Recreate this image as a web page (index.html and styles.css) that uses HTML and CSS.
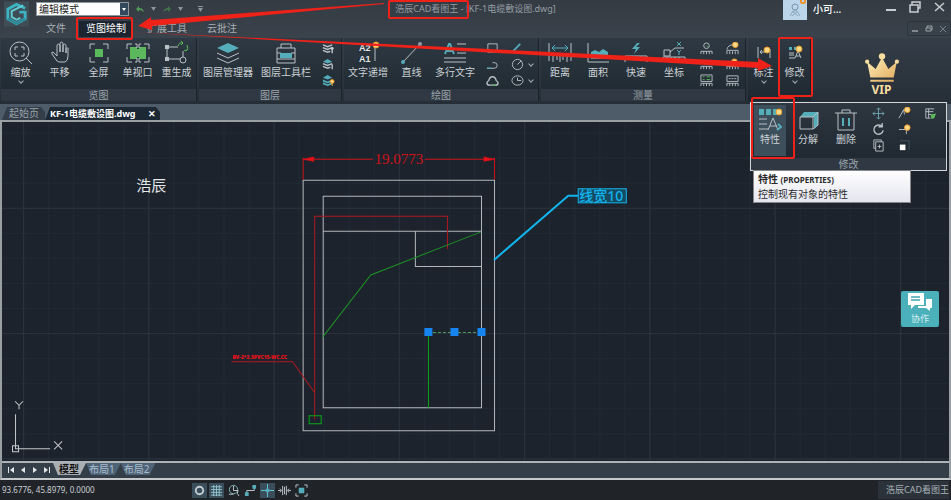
FILE: index.html
```html
<!DOCTYPE html>
<html lang="zh-CN">
<head>
  <meta charset="UTF-8" />
  <meta name="viewport" content="width=device-width, initial-scale=1.0"/>
  <title>浩辰CAD看图王</title>
  <link rel="stylesheet" href="styles.css">
</head>
<body>
  <div class="app">
    <header class="header">
      <div class="header-left">
        <svg class="logo" viewBox="0 0 26 26">
          <rect width="26" height="26" fill="#3f4d57"/>
          <path d="M22 7 13 3 4 8v10l9 5 9-5v-7h-6" fill="none" stroke="#3bb3c0" stroke-width="3"/>
          <path d="M20 4 8 10v6l5 3 4-2" fill="none" stroke="#63cdd5" stroke-width="2"/>
          <path d="m4 18 9 5 9-5" fill="none" stroke="#2a8797" stroke-width="2"/>
        </svg>
        <div class="header-rows">
          <div class="quick">
            <span class="mode">
              <select aria-label="模式"><option>编辑模式</option></select>
            </span>
            <button aria-label="撤销"><svg width="8" height="8" viewBox="0 0 8 8"><path d="M0 4 3 1v2q4 0 5 4-2-2-5-2v2z" fill="#4f9a55"/></svg></button>
            <button aria-label="撤销列表"><svg width="5" height="4" viewBox="0 0 5 4"><path d="M0 0h5L2.500 4z" fill="#8c959c"/></svg></button>
            <button aria-label="重做"><svg width="8" height="8" viewBox="0 0 8 8"><path d="M8 4 5 1v2q-4 0-5 4 2-2 5-2v2z" fill="#46704f"/></svg></button>
            <button aria-label="重做列表"><svg width="5" height="4" viewBox="0 0 5 4"><path d="M0 0h5L2.500 4z" fill="#8c959c"/></svg></button>
            <button class="more" aria-label="自定义"><svg width="5" height="6" viewBox="0 0 5 6"><path d="M0 0h5v1H0zM0 2h5L2.500 6z" fill="#8c959c"/></svg></button>
          </div>
          <nav class="menu">
            <a href="#">文件</a>
            <a href="#" class="active">览图绘制</a>
            <a href="#">扩展工具</a>
            <a href="#">云批注</a>
          </nav>
        </div>
      </div>
      <h1 class="title">浩辰CAD看图王 - [KF-1电缆敷设图.dwg]</h1>
      <div class="header-right">
        <div class="window-row">
          <svg class="avatar" viewBox="0 0 24 20">
            <rect width="24" height="20" fill="#bdd5e8"/>
            <circle cx="12" cy="7" r="3" fill="none" stroke="#7793ad"/>
            <path d="m7 16 3-5h4l3 5M9 11l6 5M15 11l-6 5" fill="none" stroke="#8aa6bd"/>
            <path d="M18 0v2q0 1 2 1t2-1V0" fill="none" stroke="#f0952d" stroke-width="2"/>
          </svg>
          <span class="user">小可...</span>
          <button aria-label="最小化"><svg width="12" height="12" viewBox="0 0 12 12"><path d="M1 9h10" stroke="#c8ced3" stroke-width="2"/></svg></button>
          <button aria-label="还原"><svg width="12" height="12" viewBox="0 0 12 12"><path d="M3 4V1h8v6H9M1 4h8v7H1z" fill="none" stroke="#c8ced3" stroke-width="1.500"/></svg></button>
          <button aria-label="关闭"><svg width="12" height="12" viewBox="0 0 12 12"><path d="m2 2 9 8M11 2l-9 8" stroke="#c8ced3" stroke-width="1.500"/></svg></button>
        </div>
        <div class="doc-controls">
          <button aria-label="最小化文档"><svg width="8" height="8" viewBox="0 0 8 8"><path d="M1 6h6" stroke="#9ba3aa" stroke-width="1.500"/></svg></button>
          <button aria-label="还原文档"><svg width="8" height="8" viewBox="0 0 8 8"><path d="M2 3V1h5v4H6M1 3h5v3H1z" fill="none" stroke="#9ba3aa"/></svg></button>
          <button aria-label="关闭文档"><svg width="8" height="8" viewBox="0 0 8 8"><path d="m1 1 6 6M7 1 1 7" stroke="#707b84"/></svg></button>
        </div>
      </div>
    </header>

    <div class="ribbon">
      <section class="panel">
        <div class="tools">
          <button class="tool">
            <svg viewBox="0 0 24 24"><circle cx="10.500" cy="10.500" r="9.500"/><path d="m17 17 6 6"/><path d="M6 9V6h3M12 6h3v3M15 12v3h-3M9 15H6v-3"/></svg>
            缩放<i class="caret"></i>
          </button>
          <button class="tool">
            <svg viewBox="0 0 24 24"><path d="m9 20-5-7q-1-2 1-2l4 4V5q0-2 1.500-2T12 5v6-8q0-2 1.500-2T15 3v8-6q0-2 1.500-2T18 5v7-4q0-1 1.500-1T20 8v7q0 5-3 6h-5q-2 0-3-1z"/></svg>
            平移
          </button>
          <button class="tool">
            <svg viewBox="0 0 24 24"><path d="M3 8V3h5M16 3h5v5M21 16v5h-5M8 21H3v-5"/><path class="green" d="M8 8h8v8H8z"/></svg>
            全屏
          </button>
          <button class="tool">
            <svg viewBox="0 0 24 24"><path class="green" d="M4 6h7v12H4zM13 6h7v12h-7z"/><path class="green" d="M4 8h16v8H4z"/><path d="M1 8V3h5M9 3h2v4M15 3h-2v4M18 3h5v5M23 16v5h-5M15 21h-2v-4M9 21h2v-4M6 21H1v-5"/></svg>
            单视口
          </button>
          <button class="tool">
            <svg viewBox="0 0 24 24"><path d="M13 6H2v12h13"/><path d="M0 4h4v4H0zM0 16h4v4H0z" fill="#b9c0c6" stroke="none"/><path d="M18 10v6"/><circle cx="18" cy="19" r="3"/><path d="M13 5q1-4 5-3M22 4q2 4-1 6M16 0l2 2-2 2M19 9l2 1 2-2" stroke="#5cb85c"/></svg>
            重生成
          </button>
        </div>
        <h2>览图</h2>
      </section>

      <section class="panel">
        <div class="tools">
          <button class="tool wide">
            <svg viewBox="0 0 24 24"><path class="teal" d="m12 2 11 5-11 5L1 7z"/><path d="m1 12 11 5 11-5M1 17l11 5 11-5"/></svg>
            图层管理器
          </button>
          <button class="tool wide">
            <svg viewBox="0 0 24 24"><path d="M7 7V3h10v4M3 7h18v15H3zM3 12h4M17 12h4M3 18h18"/><path class="teal" d="M6 12h12v5H6z"/></svg>
            图层工具栏
          </button>
          <div class="small-tools">
            <button aria-label="关闭图层"><svg viewBox="0 0 14 14"><path d="m1 3 5 2 5-2M1 6l5 2 5-2M1 9l5 2 3-1M11 7v5" stroke-width="1.500"/><circle cx="11" cy="7" r="1.500" fill="#ccd2d6" stroke="none"/></svg></button>
            <button aria-label="冻结图层"><svg viewBox="0 0 14 14"><path class="teal" d="m6 1 5 3-5 2-5-2z"/><path d="m1 6 5 2 5-2M1 9l5 2 3-1M11 7v5" stroke-width="1.500"/></svg></button>
            <button aria-label="打开图层"><svg viewBox="0 0 14 14"><path class="teal" d="m6 1 5 3-5 2-5-2zM1 6l5 2 5-2v2l-5 2-5-2zM1 9l5 2 5-2v2l-5 2-5-2z"/><circle class="gold" cx="11" cy="8" r="2"/><path d="M11 9v4" stroke="#e9a53a"/></svg></button>
          </div>
        </div>
        <h2>图层</h2>
      </section>

      <section class="panel draw">
        <div class="tools">
          <button class="tool mid">
            <svg viewBox="0 0 24 24"><g class="glyph"><text x="3" y="10">A2</text><text x="3" y="21">A1</text></g><path d="M19 6v14M17 5h4"/><circle class="gold" cx="20" cy="4" r="3"/></svg>
            文字递增
          </button>
          <button class="tool">
            <svg viewBox="0 0 24 24"><path d="M3 21 20 3"/><circle class="teal" cx="3" cy="21" r="2"/><circle cx="20" cy="3" r="2" fill="#8f9aa3" stroke="none"/></svg>
            直线
          </button>
          <button class="tool mid">
            <svg viewBox="0 0 24 24"><path d="m2 13 4-10h1l4 10M4 10h6" stroke="#55adba" stroke-width="2"/><path d="M14 3h9M14 8h9M14 12h9M1 17h22M1 21h22"/></svg>
            多行文字
          </button>
          <div class="small-tools">
            <button aria-label="矩形"><svg viewBox="0 0 14 14"><path d="M2 2h10v9H2z"/></svg></button>
            <button aria-label="多段线"><svg viewBox="0 0 14 14"><path d="M1 11h8q3 0 3-3T9 5H7"/><path d="M1 11h5" stroke="#55adba"/></svg></button>
            <button aria-label="云线"><svg viewBox="0 0 14 14"><path d="M4 12q-3 0-3-2t2-3q1-4 4-4t4 4q2 1 2 3t-3 2z" stroke-width="1.500"/><path d="M6 12h5" stroke="#5cb85c"/></svg></button>
          </div>
          <div class="small-tools pairs">
            <button aria-label="画笔"><svg viewBox="0 0 14 14"><path d="m2 10 8-8" stroke="#55adba" stroke-width="2"/></svg></button>
            <button aria-label="圆"><svg viewBox="0 0 14 14"><circle cx="7" cy="7" r="5.500"/><path d="m7 7 4-4"/></svg><i class="caret"></i></button>
            <button aria-label="椭圆"><svg viewBox="0 0 14 14"><ellipse cx="7" cy="7" rx="6" ry="5"/><path d="M7 4v3h4"/></svg><i class="caret"></i></button>
          </div>
        </div>
        <h2>绘图</h2>
      </section>

      <section class="panel measure">
        <div class="tools">
          <button class="tool">
            <svg viewBox="0 0 24 24"><path d="M1 2v18M23 2v18M5 14v7M9 14v5M12 14v7M15 14v5M19 14v7M1 14h22"/><path d="M4 7h16M7 4 4 7l3 3M17 4l3 3-3 3" stroke="#55adba"/></svg>
            距离
          </button>
          <button class="tool">
            <svg viewBox="0 0 24 24"><path d="M2 2v19h21"/><path class="teal" d="M5 18v-7l4-2 4 2 4-3 5 3v7z"/></svg>
            面积
          </button>
          <button class="tool">
            <svg viewBox="0 0 24 24"><path class="teal" d="m13 2-5 6h4l-2 5 6-7h-4l4-4z"/><path d="M1 21v-6h22v6M5 15v4M9 15v4M13 15v4M17 15v4"/></svg>
            快速
          </button>
          <button class="tool">
            <svg viewBox="0 0 24 24"><path d="M2 9h6v6H2zM8 11l5-4h9M1 21v-5h22v5M5 16v4M9 16v4M13 16v4M17 16v4"/><path d="m15 1 4 4M19 1l-4 4M15 9l2 2 2-2M17 11v3" stroke="#55adba"/></svg>
            坐标
          </button>
          <div class="small-tools">
            <button aria-label="半径"><svg viewBox="0 0 14 14"><circle cx="7" cy="4" r="3"/><path d="m7 4 2 2" stroke="#5cb85c"/><path d="M1 13v-3h12v3M4 10v3M7 10v3M10 10v3"/></svg></button>
            <button aria-label="弧长"><svg viewBox="0 0 14 14"><path d="M3 6q4-4 8 0M1 12V9h12v3M4 9v3M7 9v3M10 9v3"/></svg></button>
            <button aria-label="列表"><svg viewBox="0 0 14 14"><path d="M1 1h12v7H1zM1 13v-3h12v3M4 10v3M7 10v3M10 10v3"/><path d="M3 3h2M3 6h2M7 3h4M7 6h4" stroke="#5cb85c"/></svg></button>
          </div>
          <div class="small-tools">
            <button aria-label="角度"><svg viewBox="0 0 14 14"><path d="M1 8q1-5 7-5M1 13v-4h12v4M4 10v3M7 10v3M10 10v3"/><circle class="gold" cx="10" cy="3" r="3"/></svg></button>
            <button aria-label="连续"><svg viewBox="0 0 14 14"><path d="M1 12V9h12v3M4 9v3M7 9v3M10 9v3M1 5h6"/><circle class="gold" cx="9" cy="4" r="3"/></svg></button>
            <button aria-label="统计"><svg viewBox="0 0 14 14"><path d="M1 2h12v6H1zM1 13v-3h12v3M4 10v3M7 10v3M10 10v3M3 5h2M6 5h2M9 5h2"/></svg></button>
          </div>
        </div>
        <h2>测量</h2>
      </section>

      <section class="panel dropdowns">
        <button class="tool">
          <svg viewBox="0 0 24 24"><path d="M6 6v11M18 8v9M8 11h6M10 9l-2 2 2 2"/><circle class="gold" cx="15" cy="9" r="3"/></svg>
          标注<i class="caret"></i>
        </button>
        <button class="tool">
          <svg viewBox="0 0 24 24"><path class="teal" d="M6 6h3v3H6zM11 6h3v3h-3z"/><path d="M6 12h5M6 14h5M6 17h6M12 17l3-7 3 7M13 15h4"/><circle class="gold" cx="16" cy="8" r="3"/></svg>
          修改<i class="caret"></i>
        </button>

        <div class="popup">
          <div class="tools">
            <button class="tool selected">
              <svg viewBox="0 0 24 24"><path class="teal" d="M1 1h5v6H1zM8 1h5v6H8zM15 1h4v6h-4z"/><path d="M1 11h8M1 16h8M1 21h9M10 22l5-12 5 12M12 18h7"/><circle class="gold" cx="21" cy="4" r="3"/><path d="m20 16 3 3-4 3" stroke="#55adba" stroke-width="2"/></svg>
              特性
            </button>
            <button class="tool">
              <svg viewBox="0 0 24 24"><path class="teal" d="m4 9 4-5h14v13l-4 4V9z"/><path d="M4 9h13v12H4zM17 9l5-5M22 4v13l-5 4"/></svg>
              分解
            </button>
            <button class="tool">
              <svg viewBox="0 0 24 24"><path d="M1 5h22M8 5V2h8v3M4 5v17h16V5"/><path d="M9 10v8M15 10v8" stroke="#55adba" stroke-width="2"/></svg>
              删除
            </button>
            <div class="small-tools">
              <button aria-label="移动"><svg viewBox="0 0 14 14"><path d="M7 1v12M1 7h12M5 3l2-2 2 2M5 11l2 2 2-2M3 5 1 7l2 2M11 5l2 2-2 2" stroke="#6fa5b0"/></svg></button>
              <button aria-label="旋转"><svg viewBox="0 0 14 14"><path d="M11 4a5 5 0 1 0 1 4M11 0v4H7" stroke-width="1.500"/></svg></button>
              <button aria-label="复制"><svg viewBox="0 0 14 14"><path d="M4 10H2V1h8v2M4 3h8v10H4zM8 6v4M6 8h4"/></svg></button>
            </div>
            <div class="small-tools">
              <button aria-label="修剪"><svg viewBox="0 0 14 14"><path d="m1 12 5-9h3M6 3l1 5"/><circle class="gold" cx="10" cy="3" r="3"/></svg></button>
              <button aria-label="延伸"><svg viewBox="0 0 14 14"><path d="M1 7h7M9 7v5"/><circle class="gold" cx="10" cy="5" r="3"/></svg></button>
              <button aria-label="缩放对象"><svg viewBox="0 0 14 14"><path d="M2 2h10v10" stroke="#3f5564"/><path d="M2 6h6v6H2z" fill="#fff" stroke="none"/></svg></button>
            </div>
            <div class="small-tools">
              <button aria-label="匹配"><svg viewBox="0 0 14 14"><path d="M2 2h9M2 2v10h5M5 2v10M2 5h8M5 8h3"/><path class="green" d="m7 8 6-1-2 5-3 1z"/></svg></button>
            </div>
          </div>
          <h2>修改</h2>
          <div class="tooltip" role="tooltip">
            <p><strong>特性 <small>(PROPERTIES)</small></strong></p>
            <p>控制现有对象的特性</p>
          </div>
        </div>
      </section>

      <a href="#" class="vip">
        <svg viewBox="0 0 32 28">
          <defs><linearGradient id="gold" x2="1" y2="1"><stop stop-color="#fff0bd"/><stop offset="1" stop-color="#dfa858"/></linearGradient></defs>
          <path d="m2 8 8 7 6-11 6 11 8-7-3 15H5zM5 25h22v2H5z" fill="url(#gold)"/>
          <g fill="#f7dea0"><circle cx="16" cy="3" r="3"/><circle cx="2" cy="8" r="2"/><circle cx="30" cy="8" r="2"/></g>
        </svg>
        VIP
      </a>
    </div>

    <nav class="doc-tabs">
      <a href="#">起始页</a>
      <a href="#" class="active">KF-1电缆敷设图.dwg <span>✕</span></a>
    </nav>

    <main class="workspace">
      <div class="canvas">
        <svg class="drawing" viewBox="3 122 945 339" preserveAspectRatio="xMidYMid slice">
          <defs>
            <pattern id="minor" x="24" y="83" width="25" height="25" patternUnits="userSpaceOnUse"><path d="M0 .500h25M.500 0v25" stroke="#202a34"/></pattern>
            <pattern id="major" x="24" y="83" width="125" height="125" patternUnits="userSpaceOnUse"><path d="M0 .500h125M.500 0v125" stroke="#29323d"/></pattern>
          </defs>
          <rect x="3" y="122" width="945" height="339" fill="url(#minor)"/>
          <rect x="3" y="122" width="945" height="339" fill="url(#major)"/>

          <text x="137" y="191" fill="#e4e7e9" font-size="15">浩辰</text>

          <!-- walls -->
          <g fill="none" stroke="#b4b8bc">
            <path d="M303.500 180.500h191v250h-191z"/>
            <path d="M323.500 196.500h158v211h-158zM323.500 231.500h158M415.500 231.500v35h66"/>
          </g>

          <!-- dimension -->
          <g stroke="#cf1218" fill="none">
            <path d="M303.500 180v-22M494.500 180v-22M303 159.500h70M425 159.500h69"/>
            <path d="m304 159.500 10-2v4zM494 159.500l-10-2v4z" fill="#f01018"/>
          </g>
          <text class="dimension" x="399" y="164" text-anchor="middle">19.0773</text>

          <!-- cable runs -->
          <path d="M447.500 249v-32.500h-132.500V419M232 361.500h61l22 31" fill="none" stroke="#b01820"/>
          <text class="note" x="233" y="359">BV-2*2.5PVC15-WC.CC</text>
          <path d="m481 232-110 43-48 62" fill="none" stroke="#1c9126"/>
          <path d="M428.500 332v76M309.500 415.500h12v8h-12z" fill="none" stroke="#0ba814"/>
          <path d="M428 332.500h53" stroke="#4c9b55" stroke-dasharray="3 2"/>
          <path d="M424.500 328h8v8h-8zM450.500 328h8v8h-8zM477.500 328h8v8h-8z" fill="#1683ef"/>

          <!-- leader -->
          <path d="m494 260 74-64h10" fill="none" stroke="#12b4ee" stroke-width="2"/>
          <rect x="578" y="189" width="48" height="14" fill="#164a60" stroke="#12b4ee" stroke-width="1"/>
          <text x="579" y="201" fill="#12b4ee" font-size="14" font-weight="500">线宽10</text>

          <!-- axes -->
          <g fill="none" stroke="#c3c8cc">
            <path d="M16.500 448v-34M16 448.500h35M13.500 445.500h6v6h-6z"/>
            <path d="m16 401 4 4 4-4M20 405v4M55 441l8 8M63 441l-8 8"/>
          </g>
        </svg>
        <button class="chat">
          <svg viewBox="0 0 26 20"><path d="M1 1h16v12H8l-4 4v-4H1z" fill="#fff"/><path d="M19 7h6v9h-2v3l-4-3h-8v-2h8z" fill="#fff"/><path d="M4 5h9M4 8h9" stroke="#45a5b0" stroke-width="1.500"/></svg>
          协作
        </button>
      </div>
      <nav class="sheets">
        <button aria-label="第一个"><svg viewBox="0 0 6 6"><path d="M0 0h1v6H0zM6 0v6L2 3z"/></svg></button>
        <button aria-label="上一个"><svg viewBox="0 0 6 6"><path d="M5 0v6L1 3z"/></svg></button>
        <button aria-label="下一个"><svg viewBox="0 0 6 6"><path d="M1 0v6l4-3z"/></svg></button>
        <button aria-label="最后一个"><svg viewBox="0 0 6 6"><path d="M5 0h1v6H5zM0 0v6l4-3z"/></svg></button>
        <a href="#" class="active">模型</a>
        <a href="#">布局1</a>
        <a href="#">布局2</a>
      </nav>
    </main>

    <footer class="status">
      <span class="coords">93.6776, 45.8979, 0.0000</span>
      <div class="toggles">
        <button class="on" aria-label="捕捉"><svg viewBox="0 0 14 14"><circle cx="7" cy="7" r="4" stroke-width="2"/></svg></button>
        <button class="on" aria-label="栅格"><svg viewBox="0 0 14 14"><path d="M1 3h12M1 6h12M1 9h12M1 12h12M4 1v12M7 1v12M10 1v12" stroke="#93c6cf"/></svg></button>
        <button aria-label="极轴"><svg viewBox="0 0 14 14"><circle cx="7" cy="6" r="4.500" stroke="#7fb4bd"/><path d="M7 2v5h5l-1 3 2 3M2 11h5"/></svg></button>
        <button aria-label="正交"><svg viewBox="0 0 14 14"><path d="M3 11V7h8V3"/><path class="teal" d="M1 9h4v4H1zM9 1h4v4H9z"/></svg></button>
        <button class="on" aria-label="对象捕捉"><svg viewBox="0 0 14 14"><path d="M7 0v14M0 7h14" stroke="#5fd0dc"/><path class="teal" d="M4 7l3-3 3 3-3 3z"/></svg></button>
        <button aria-label="线宽"><svg viewBox="0 0 14 14"><path d="M5 2v10M9 2v10M7 3v8M0 7h3M11 7h3M2 5l2 2-2 2M12 5l-2 2 2 2"/></svg></button>
        <button aria-label="全屏显示"><svg viewBox="0 0 14 14"><path d="M1 4V1h3M10 1h3v3M13 10v3h-3M4 13H1v-3"/><path class="teal" d="M4 4h6v6H4z"/></svg></button>
      </div>
      <span class="brand">浩辰CAD看图王</span>
    </footer>

    <svg class="markup" width="951" height="200" viewBox="0 0 951 200">
      <g fill="none" stroke="#ee2219" stroke-width="2">
        <rect x="77" y="18" width="55" height="21" rx="1"/>
        <rect x="389" y="1" width="79" height="17" rx="1"/>
        <rect x="779" y="38" width="33" height="58" rx="1"/>
        <rect x="752" y="98" width="42" height="60" rx="1"/>
      </g>
      <path d="m384 3-233 17v-3l-13 9 14 4v-4l232-22zM133 32l625 30v-4l14 8-14 5v-3z" fill="#ee2219"/>
    </svg>
  </div>
</body>
</html>
```
FILE: styles.css
```css
* {
  box-sizing: border-box;
}

body {
  margin: 0;
  font-family: "Noto Sans", "Noto Sans CJK SC", sans-serif;
  font-size: 10px;
  line-height: 14px;
  color: #ccd2d6;
  background: #222a33;
}

button {
  padding: 0;
  border: none;
  background: none;
  color: inherit;
  font: inherit;
  cursor: pointer;
}

a {
  color: inherit;
  text-decoration: none;
}

svg {
  display: block;
}

h1,
h2,
p {
  margin: 0;
  font-size: 10px;
  font-weight: 400;
}

.app {
  position: relative;
  display: flex;
  flex-direction: column;
  min-height: 100vh;
}

/* header */
.header {
  display: grid;
  grid-template-columns: 1fr auto 1fr;
  height: 38px;
  background: linear-gradient(#343b43, #3a424b);
}

.header-left {
  display: flex;
  gap: 7px;
  padding-left: 4px;
}

.logo {
  width: 25px;
  height: 26px;
  margin-top: 1px;
}

.header-rows {
  display: flex;
  flex-direction: column;
  gap: 4px;
}

.quick {
  display: flex;
  align-items: center;
  gap: 7px;
  height: 17px;
  padding-top: 1px;
}

.mode {
  position: relative;
}

.mode select {
  display: block;
  width: 93px;
  height: 14px;
  padding: 0 2px;
  border: 1px solid #8b97a0;
  border-radius: 0;
  appearance: none;
  background: #fff;
  color: #222;
  font: inherit;
  line-height: 12px;
}

.mode::after {
  content: "";
  position: absolute;
  top: 1px;
  right: 1px;
  width: 8px;
  height: 12px;
  background: #33485a;
  clip-path: polygon(0 0, 100% 0, 100% 100%, 0 100%, 0 0, 2px 5px, 4px 8px, 6px 5px, 2px 5px);
}

.quick .more {
  margin-left: 8px;
}

.menu {
  display: flex;
  height: 16px;
  color: #a8afb5;
}

.menu a {
  padding: 0 10px;
}

.menu .active {
  margin: 0 4px 0 3px;
  padding: 0 7px;
  background: #1c2530;
  color: #fff;
}

.title {
  padding-top: 2px;
  color: #959da4;
  font-size: 9px;
}

.header-right {
  display: flex;
  flex-direction: column;
  align-items: flex-end;
  gap: 1px;
}

.window-row {
  display: flex;
  align-items: center;
  height: 20px;
  padding-right: 6px;
}

.avatar {
  width: 24px;
  height: 20px;
  margin-right: 6px;
}

.user {
  width: 72px;
  padding-bottom: 2px;
  color: #fff;
  font-weight: 500;
}

.window-row button {
  padding-bottom: 6px;
}

.window-row button + button {
  margin-left: 12px;
}

.doc-controls {
  display: flex;
  align-items: center;
  gap: 6px;
  height: 15px;
  padding: 0 3px;
  border: 1px solid #2b333c;
  border-radius: 2px;
}

/* ribbon */
.ribbon {
  display: flex;
  gap: 3px;
  height: 66px;
  padding: 0 1px 3px;
  background: linear-gradient(#353e48, #252d36);
}

.panel {
  display: flex;
  flex-direction: column;
  justify-content: space-between;
  background: linear-gradient(#2f3943, #1e2830);
  box-shadow: 1px 0 #1b232b;
}

.panel h2 {
  height: 12px;
  background: #303943;
  color: #9ba4ab;
  line-height: 12px;
  text-align: center;
}

.tools {
  display: flex;
}

.tool {
  display: flex;
  flex-direction: column;
  align-items: center;
  width: 39px;
  padding-top: 3px;
  white-space: nowrap;
}

.measure .tool,
.popup .tool {
  width: 38px;
}

.tool.wide {
  width: 58px;
}

.tool.mid {
  width: 48px;
}

.ribbon svg {
  fill: none;
  stroke: #b9c0c6;
}

.tool svg {
  width: 24px;
  height: 24px;
}

.app .green {
  fill: #5cb85c;
  stroke: none;
}

.app .teal {
  fill: #55adba;
  stroke: none;
}

.app .gold {
  fill: #ffd98a;
  stroke: #f09a26;
}

.glyph {
  fill: #e4e7e9;
  stroke: none;
  font-family: "Liberation Sans", sans-serif;
  font-size: 9px;
  font-weight: 700;
}

.caret {
  width: 4px;
  height: 4px;
  border: solid #a5adb3;
  border-width: 0 1px 1px 0;
  transform: rotate(45deg);
}

.small-tools {
  display: flex;
  flex-direction: column;
  align-items: center;
  width: 26px;
  padding-top: 2px;
}

.small-tools button {
  display: flex;
  align-items: center;
  height: 16px;
}

.small-tools svg {
  width: 13px;
  height: 13px;
}

.small-tools.pairs {
  align-items: flex-start;
  width: 33px;
  padding-left: 6px;
}

.small-tools .caret {
  margin-left: 5px;
}

.panel.dropdowns {
  position: relative;
  flex-direction: row;
}

.dropdowns > .tool {
  width: 31px;
}

.popup {
  position: absolute;
  z-index: 2;
  top: 64px;
  left: 2px;
  width: 197px;
  border: 1px solid #d3d7da;
  background: linear-gradient(#2e3740, #1d262e);
}

.popup .tools {
  height: 55px;
  padding: 2px 0;
}

.popup .small-tools {
  padding-top: 0;
}

.popup .tool.selected {
  width: 32px;
  margin: 0 3px;
  background: #3c4f5a;
}

.tooltip {
  position: absolute;
  top: 100%;
  left: 2px;
  width: 158px;
  padding: 1px 4px;
  border: 1px solid #888;
  background: linear-gradient(#fff, #e4e5ef);
  color: #2a2a2a;
}

.tooltip small {
  font-size: 8px;
}

.vip {
  display: flex;
  flex: 1;
  flex-direction: column;
  align-items: center;
  padding-top: 15px;
  color: #f7dea0;
  font-size: 12px;
  font-weight: 700;
}

.vip svg {
  width: 34px;
  height: 30px;
  stroke: none;
}

/* document tabs */
.doc-tabs {
  display: flex;
  align-items: flex-end;
  height: 16px;
  padding-left: 2px;
  background: #4e5c6a;
  line-height: 13px;
}

.doc-tabs a {
  height: 13px;
  padding: 0 6px 0 7px;
  background: #343e49;
  clip-path: polygon(5px 0, calc(100% - 4px) 0, 100% 5px, 100% 100%, 0 100%);
  color: #9ba4ab;
}

.doc-tabs .active {
  padding: 0 4px 0 5px;
  background: #1c2833;
  color: #fff;
  font-size: 9px;
  font-weight: 700;
}

.doc-tabs span {
  margin-left: 10px;
}

/* drawing */
.workspace {
  display: flex;
  flex: 1;
  flex-direction: column;
  border: 2px solid #9a9fa4;
  border-bottom-color: #c5c9cc;
}

.canvas {
  position: relative;
  display: flex;
  flex: 1;
  background: #1c232c;
}

.drawing {
  flex: 1;
  width: 100%;
  height: 339px;
}

.dimension {
  fill: #cf1218;
  font-family: "Liberation Serif", serif;
  font-size: 15px;
}

.note {
  fill: #f01018;
  font-size: 5px;
  font-weight: 900;
}

.chat {
  position: absolute;
  top: 169px;
  right: 10px;
  display: flex;
  flex-direction: column;
  align-items: center;
  justify-content: center;
  width: 38px;
  height: 36px;
  border-radius: 2px;
  background: #4bb0ba;
  color: #d4eef1;
  font-size: 9px;
}

.chat svg {
  width: 26px;
  height: 20px;
}

.sheets {
  display: flex;
  height: 17px;
  padding-left: 3px;
  border-top: 2px solid #aeb3b7;
  background: #343e49;
}

.sheets button {
  width: 12px;
  height: 13px;
}

.sheets svg {
  width: 6px;
  height: 6px;
  margin: 0 auto;
  fill: #e4e7e9;
}

.sheets a {
  height: 12px;
  padding: 0 6px 0 3px;
  background: #4f6377;
  clip-path: polygon(0 0, 100% 0, calc(100% - 6px) 100%, 5px 100%);
  color: #a9bfce;
  line-height: 12px;
}

.sheets .active {
  padding: 0 7px 0 6px;
  background: #a9aeb3;
  color: #111;
  font-weight: 700;
}

/* status bar */
.status {
  display: flex;
  align-items: center;
  justify-content: space-between;
  height: 20px;
  padding: 0 2px;
  background: #202328;
}

.coords {
  width: 190px;
  font-size: 8px;
}

.toggles {
  display: flex;
  flex: 1;
  gap: 2px;
}

.toggles button {
  padding: 1px;
  width: 15px;
}

.toggles .on {
  background: #3a4d5a;
}

.toggles svg {
  width: 13px;
  height: 13px;
  fill: none;
  stroke: #c3cdd2;
}

.brand {
  padding: 2px 0 2px 8px;
  background: #2b323a;
  color: #a9b1b7;
  font-size: 9px;
}

.markup {
  position: absolute;
  z-index: 3;
  top: 0;
  left: 0;
  pointer-events: none;
}
```
